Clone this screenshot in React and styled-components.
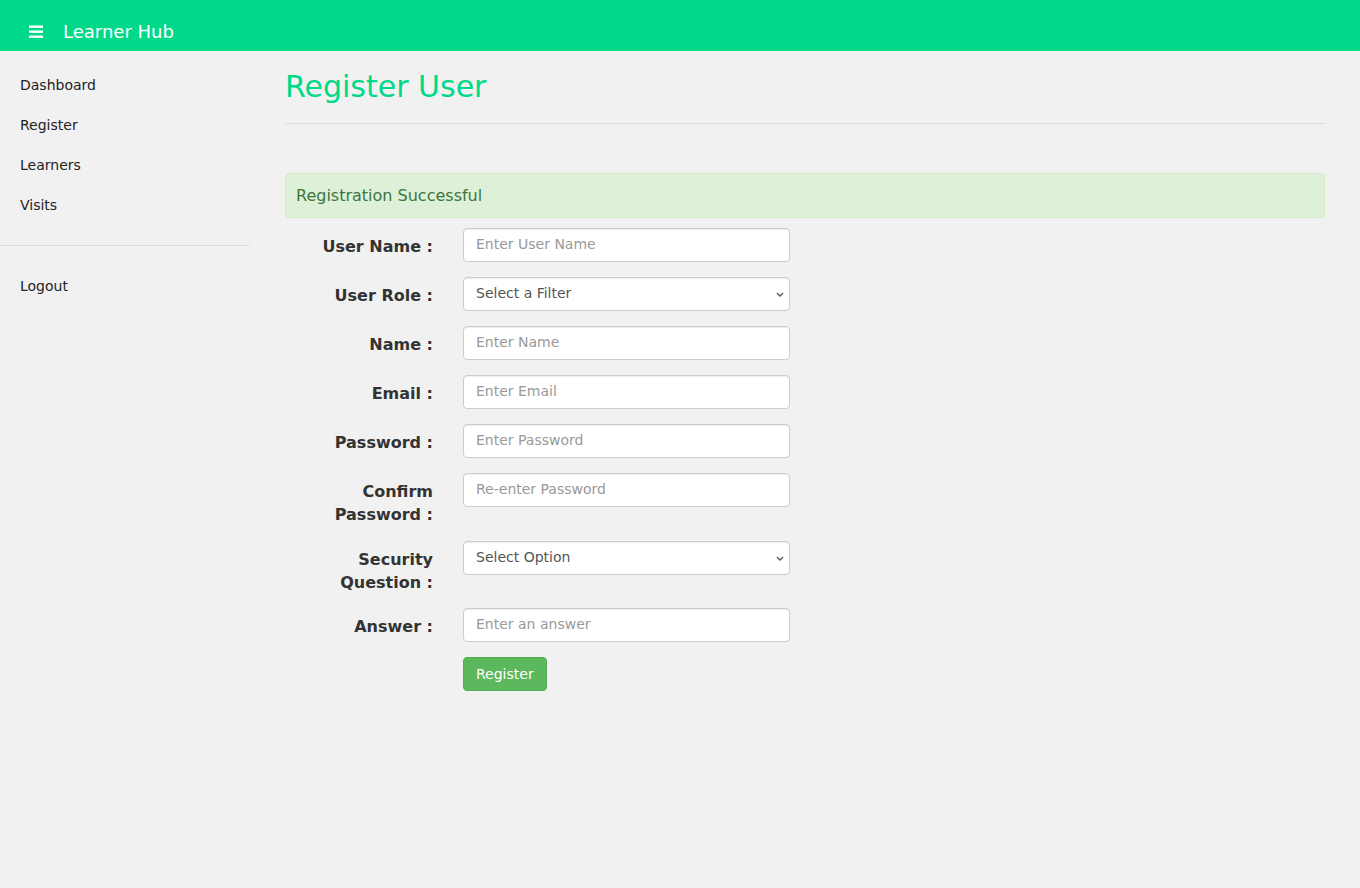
import React from 'react';
import styled, { createGlobalStyle } from 'styled-components';

const GlobalStyle = createGlobalStyle`
    html, body {
        margin: 0;
        padding: 0;
        background: #f1f1f1;
        font-family: "DejaVu Sans", "Noto Sans", sans-serif;
        color: #333;
    }
    * { box-sizing: border-box; }
`

const fields = [
    { label: 'User Name :', placeholder: 'Enter User Name' },
    { label: 'User Role :', select: 'Select a Filter' },
    { label: 'Name :', placeholder: 'Enter Name' },
    { label: 'Email :', placeholder: 'Enter Email' },
    { label: 'Password :', placeholder: 'Enter Password' },
    { label: 'Confirm Password :', placeholder: 'Re-enter Password' },
    { label: 'Security Question :', select: 'Select Option' },
    { label: 'Answer :', placeholder: 'Enter an answer' },
];

const Burger = () => (
    <svg width="14" height="14" viewBox="0 0 14 14">
        <rect x="0" y="0.5" width="14" height="2.4" fill="#fff" />
        <rect x="0" y="5.5" width="14" height="2.4" fill="#fff" />
        <rect x="0" y="10.5" width="14" height="2.4" fill="#fff" />
    </svg>
);

const Chevron = () => (
    <svg width="8" height="5" viewBox="0 0 8 5">
        <path d="M1 1 L4 4 L7 1" fill="none" stroke="#555" strokeWidth="1.3" />
    </svg>
);

const App = () => {
    return (
        <>
            <GlobalStyle />
            <Header>
                <MenuBtn><Burger /></MenuBtn>
                <Brand>Learner Hub</Brand>
            </Header>
            <Body>
                <Sidebar>
                    <NavItem>Dashboard</NavItem>
                    <NavItem>Register</NavItem>
                    <NavItem>Learners</NavItem>
                    <NavItem>Visits</NavItem>
                    <Divider />
                    <NavItem>Logout</NavItem>
                </Sidebar>
                <Main>
                    <Title>Register User</Title>
                    <Rule />
                    <Alert>Registration Successful</Alert>
                    <Form>
                        {fields.map((f) => (
                            <Row key={f.label}>
                                <Label>{f.label}</Label>
                                {f.select ? (
                                    <SelectWrap>
                                        <Select defaultValue="">
                                            <option value="">{f.select}</option>
                                        </Select>
                                        <Arrow><Chevron /></Arrow>
                                    </SelectWrap>
                                ) : (
                                    <Input placeholder={f.placeholder} />
                                )}
                            </Row>
                        ))}
                        <Row>
                            <span />
                            <Button type="button">Register</Button>
                        </Row>
                    </Form>
                </Main>
            </Body>
        </>
    )
};

export default App;

const Header = styled.header`
    height: 51px;
    background: #00d98a;
    display: flex;
    align-items: center;
    padding: 12px 0 0 29px;
`
const MenuBtn = styled.div`
    width: 14px;
    height: 14px;
    display: flex;
    margin-right: 20px;
`
const Brand = styled.div`
    color: #fff;
    font-size: 18px;
    line-height: 20px;
`
const Body = styled.div`
    display: flex;
    min-height: 837px;
`
const Sidebar = styled.nav`
    width: 250px;
    flex-shrink: 0;
    padding-top: 14px;
`
const NavItem = styled.div`
    height: 40px;
    display: flex;
    align-items: center;
    padding-left: 20px;
    font-size: 14px;
    color: #222;
    cursor: pointer;
`
const Divider = styled.div`
    height: 1px;
    background: #ddd;
    margin: 20px 0;
`
const Main = styled.main`
    flex: 1;
    padding: 0 35px;
`
const Title = styled.h1`
    margin: 19px 0 0;
    font-size: 30px;
    line-height: 33px;
    font-weight: 400;
    color: #00d98a;
`
const Rule = styled.hr`
    border: 0;
    border-top: 1px solid #ddd;
    margin: 20px 0 49px;
`
const Alert = styled.div`
    background: #dff0d8;
    border: 1px solid #d6e9c6;
    border-radius: 4px;
    color: #3c763d;
    font-size: 16px;
    line-height: 23px;
    padding: 10px;
    margin-bottom: 10px;
`
const Form = styled.form`
    display: flex;
    flex-direction: column;
`
const Row = styled.div`
    display: grid;
    grid-template-columns: 148px 327px;
    column-gap: 30px;
    align-items: start;
    margin-bottom: 15px;
`
const Label = styled.label`
    text-align: right;
    font-weight: 700;
    font-size: 16px;
    line-height: 1.428571;
    padding-top: 8px;
    margin-bottom: -1px;
    color: #333;
`
const Input = styled.input`
    height: 34px;
    width: 100%;
    padding: 5px 12px 7px;
    font-family: inherit;
    font-size: 14px;
    color: #555;
    background: #fff;
    border: 1px solid #ccc;
    border-radius: 4px;
    box-shadow: inset 0 1px 1px rgba(0,0,0,.075);
    outline: none;
    &::placeholder { color: #999; }
`
const SelectWrap = styled.div`
    position: relative;
    width: 100%;
`
const Select = styled.select`
    display: block;
    appearance: none;
    height: 34px;
    width: 100%;
    padding: 5px 12px 7px;
    font-family: inherit;
    font-size: 14px;
    color: #555;
    background: #fff;
    border: 1px solid #ccc;
    border-radius: 4px;
    box-shadow: inset 0 1px 1px rgba(0,0,0,.075);
    outline: none;
`
const Arrow = styled.span`
    position: absolute;
    right: 6px;
    top: 15px;
    display: flex;
    pointer-events: none;
`
const Button = styled.button`
    justify-self: start;
    height: 34px;
    padding: 6px 12px;
    font-family: inherit;
    font-size: 14px;
    color: #fff;
    background: #5cb85c;
    border: 1px solid #4cae4c;
    border-radius: 4px;
    cursor: pointer;
`
